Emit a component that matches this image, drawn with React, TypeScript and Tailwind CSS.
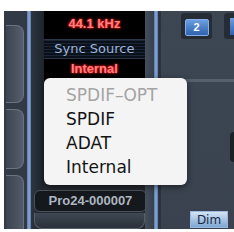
import React from 'react'

const menuItems = [
  { label: 'SPDIF–OPT', disabled: true },
  { label: 'SPDIF', disabled: false },
  { label: 'ADAT', disabled: false },
  { label: 'Internal', disabled: false },
]

export default function App() {
  return (
    <div className="relative w-[234px] h-[232px] bg-white overflow-hidden">
      <div className="absolute left-[4px] top-[11px] right-0 bottom-[3px] flex bg-[#1c2128]">
        {/* Left strip with key slots */}
        <div className="w-[40px] flex bg-[#323a45]">
          <div className="w-[20px] flex flex-col gap-[6px] pt-[14px] pl-[2px]">
            <div className="h-[78px] rounded-r-[8px] bg-gradient-to-r from-[#3b4450] to-[#56606c] border border-[#6a7480] border-l-0" />
            <div className="h-[60px] rounded-r-[8px] bg-gradient-to-r from-[#3b4450] to-[#56606c] border border-[#6a7480] border-l-0" />
            <div className="flex-1 rounded-tr-[8px] bg-gradient-to-r from-[#3b4450] to-[#525c68] border border-[#6a7480] border-l-0 border-b-0" />
          </div>
          <div className="w-[3px]" />
          <div className="w-[4px] bg-gradient-to-r from-[#5a78a8] via-[#8aa8d8] to-[#5a78a8]" />
          <div className="flex-1 bg-gradient-to-r from-[#2e3540] to-[#1e242c]" />
        </div>

        {/* Middle column */}
        <div className="w-[102px] flex flex-col">
          <div className="h-[70px] bg-black flex flex-col items-center font-['Liberation_Sans',sans-serif] font-bold">
            <div className="mt-[6px] text-[13px] leading-[14px] text-[#ff8080] [text-shadow:0_0_3px_#ff1a1a,0_0_2px_#ff1a1a]">44.1 kHz</div>
            <div className="mt-[8px] w-full h-[20px] flex items-center justify-center bg-[repeating-linear-gradient(0deg,#0a101a_0px,#0a101a_2px,#1a2536_2px,#1a2536_3px)] border-y border-[#2a3648]">
              <span className="text-[13px] leading-[14px] font-normal text-[#9cb4d8] font-['DejaVu_Sans',sans-serif]">Sync Source</span>
            </div>
            <div className="mt-[3px] text-[13px] leading-[14px] text-[#ff8080] [text-shadow:0_0_3px_#ff1a1a,0_0_2px_#ff1a1a]">Internal</div>
          </div>
          <div className="flex-1 bg-[#23282f] flex flex-col">
            <div className="flex-1" />
            <div className="ml-[-10px] mr-[-2px] h-[22px] rounded-[6px] bg-[#15191e] border border-[#4a525c] flex items-center justify-center">
              <span className="text-[13px] font-bold text-[#aeb6c0] font-['Liberation_Sans',sans-serif]">Pro24-000007</span>
            </div>
            <div className="h-[16px] mt-[1px] ml-[-10px] rounded-b-[8px] bg-gradient-to-b from-[#3e4753] to-[#2a313a] border-x border-b border-[#56606c]" />
          </div>
        </div>

        {/* Divider */}
        <div className="w-[16px] flex bg-[#3a434f]">
          <div className="w-[9px] bg-gradient-to-r from-[#454e5a] to-[#36404c]" />
          <div className="w-[4px] bg-gradient-to-r from-[#5a78a8] via-[#8aa8d8] to-[#5a78a8]" />
          <div className="flex-1 bg-[#2c333d]" />
        </div>

        {/* Right panel */}
        <div className="flex-1 flex flex-col bg-gradient-to-b from-[#3d4653] to-[#39424e]">
          <div className="flex pt-[2px] pl-[20px] gap-[12px]">
            <div className="w-[31px] h-[26px] rounded-[3px] bg-[#252c35] flex items-center justify-center pt-[2px]">
              <div className="w-[24px] h-[17px] rounded-[2px] bg-gradient-to-b from-[#6c9ee0] to-[#2f62b0] border border-[#88b0e8] flex items-center justify-center">
                <span className="text-[11px] font-bold text-white font-['Liberation_Sans',sans-serif]">2</span>
              </div>
            </div>
            <div className="w-[10px] h-[26px] rounded-l-[3px] bg-[#252c35] flex items-center justify-end">
              <div className="w-[4px] h-[17px] bg-gradient-to-b from-[#6c9ee0] to-[#2f62b0]" />
            </div>
          </div>
          <div className="mt-[40px] h-[3px] bg-[#56606c]" />
          <div className="flex-1 flex justify-end items-center">
            <div className="w-[4px] h-[30px] rounded-l-full bg-[#1c2128]" />
          </div>
          <div className="flex justify-end pr-[6px] pb-[1px]">
            <div className="w-[38px] h-[17px] bg-gradient-to-b from-[#d4e4f4] to-[#7ea6d4] border border-[#9ab8dc] flex items-center justify-center">
              <span className="text-[12px] text-[#1a2a44] font-['DejaVu_Sans',sans-serif]">Dim</span>
            </div>
          </div>
        </div>
      </div>

      {/* Popup menu */}
      <div className="absolute left-[44px] top-[78px] w-[143px] h-[107px] rounded-[6px] bg-[#f4f4f4] shadow-[0_2px_6px_rgba(0,0,0,0.5)] pt-[6px] font-['DejaVu_Sans',sans-serif]">
        {menuItems.map((item) => (
          <div
            key={item.label}
            className={`h-[24px] flex items-center pl-[22px] text-[17px] ${item.disabled ? 'text-[#a4a4a4]' : 'text-[#141414]'}`}
          >
            {item.label}
          </div>
        ))}
      </div>
    </div>
  )
}
